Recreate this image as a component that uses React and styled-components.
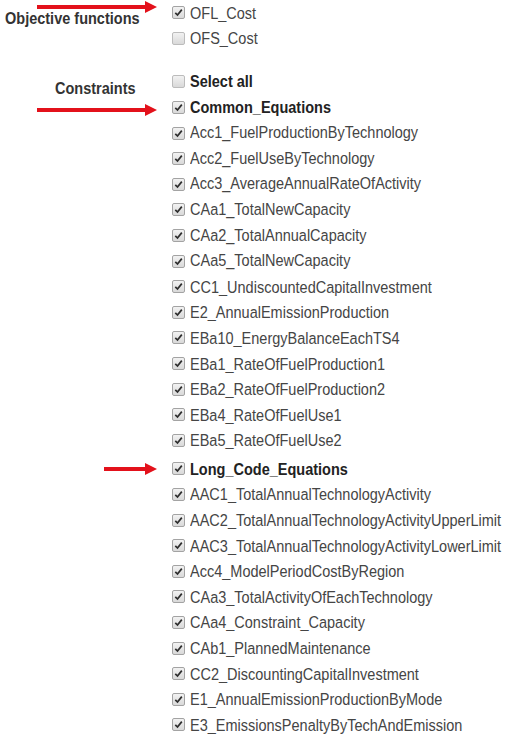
import React from 'react';
import styled, { createGlobalStyle } from 'styled-components';

const GlobalStyle = createGlobalStyle`
  body {
    margin: 0;
    background: #ffffff;
    font-family: "Liberation Sans", Arial, sans-serif;
  }
`;

const Page = styled.div`
  width: 507px;
  height: 736px;
  overflow: hidden;
  background: #ffffff;
`;

const Section = styled.div`
  display: grid;
  grid-template-columns: 172px 1fr;
  margin-top: ${(p) => p.$gap || 0}px;
`;

const SectionLabel = styled.div`
  font-size: 14.5px;
  font-weight: bold;
  color: #333;
  padding-top: ${(p) => p.$top}px;
  padding-left: ${(p) => p.$left}px;
  white-space: nowrap;
  transform: scaleY(1.1);
  transform-origin: left top;
`;

const List = styled.div`
  display: flex;
  flex-direction: column;
`;

const Row = styled.div`
  position: relative;
  display: flex;
  align-items: center;
  gap: 4px;
  height: 25.6px;
  margin-top: ${(p) => p.$gap || 0}px;
  font-size: 14.5px;
  color: ${(p) => (p.$bold ? '#222' : '#454545')};
  font-weight: ${(p) => (p.$bold ? 'bold' : 'normal')};
  white-space: nowrap;
`;

const Label = styled.span`
  display: inline-block;
  transform: scaleY(1.1);
`;

const Box = styled.span`
  flex: none;
  width: 11px;
  height: 11px;
  border: 1px solid ${(p) => (p.$checked ? '#a3a3a3' : '#bcbcbc')};
  border-radius: 2px;
  background: linear-gradient(#f2f2f2, #d9d9d9);
  display: flex;
  align-items: center;
  justify-content: center;
  margin-right: 1px;
`;

const ArrowWrap = styled.svg`
  position: absolute;
  right: calc(100% + 15px);
  top: calc(50% - 7px + ${(p) => p.$dy || 0}px);
`;

function Arrow({ length, dy }) {
  return (
    <ArrowWrap width={length} height="14" viewBox={`0 0 ${length} 14`} $dy={dy}>
      <rect x="0" y="5" width={length - 10} height="4" fill="#e3111b" />
      <polygon points={`${length - 12},1 ${length},7 ${length - 12},13`} fill="#e3111b" />
    </ArrowWrap>
  );
}

function Check({ label, checked = true, bold, arrow, gap }) {
  return (
    <Row $bold={bold} $gap={gap}>
      {arrow && <Arrow length={arrow.length} dy={arrow.dy} />}
      <Box $checked={checked}>
        {checked && (
          <svg width="9" height="9" viewBox="0 0 9 9">
            <path d="M1.3 4.8 L3.5 7 L7.8 1.6" stroke="#2e2e2e" strokeWidth="1.7" fill="none" />
          </svg>
        )}
      </Box>
      <Label>{label}</Label>
    </Row>
  );
}

const common = [
  'Acc1_FuelProductionByTechnology',
  'Acc2_FuelUseByTechnology',
  'Acc3_AverageAnnualRateOfActivity',
  'CAa1_TotalNewCapacity',
  'CAa2_TotalAnnualCapacity',
  'CAa5_TotalNewCapacity',
  'CC1_UndiscountedCapitalInvestment',
  'E2_AnnualEmissionProduction',
  'EBa10_EnergyBalanceEachTS4',
  'EBa1_RateOfFuelProduction1',
  'EBa2_RateOfFuelProduction2',
  'EBa4_RateOfFuelUse1',
  'EBa5_RateOfFuelUse2',
];

const longCode = [
  'AAC1_TotalAnnualTechnologyActivity',
  'AAC2_TotalAnnualTechnologyActivityUpperLimit',
  'AAC3_TotalAnnualTechnologyActivityLowerLimit',
  'Acc4_ModelPeriodCostByRegion',
  'CAa3_TotalActivityOfEachTechnology',
  'CAa4_Constraint_Capacity',
  'CAb1_PlannedMaintenance',
  'CC2_DiscountingCapitalInvestment',
  'E1_AnnualEmissionProductionByMode',
  'E3_EmissionsPenaltyByTechAndEmission',
];

export default function App() {
  return (
    <Page>
      <GlobalStyle />
      <Section>
        <SectionLabel $top={9} $left={5}>Objective functions</SectionLabel>
        <List>
          <Check label="OFL_Cost" arrow={{ length: 120, dy: -6 }} />
          <Check label="OFS_Cost" checked={false} />
        </List>
      </Section>

      <Section $gap={18}>
        <SectionLabel $top={10} $left={55}>Constraints</SectionLabel>
        <List>
          <Check label="Select all" checked={false} bold />
          <Check label="Common_Equations" bold arrow={{ length: 120, dy: 2 }} />
          {common.map((name) => (
            <Check key={name} label={name} />
          ))}
          <Check label="Long_Code_Equations" bold gap={3} arrow={{ length: 53, dy: 0 }} />
          {longCode.map((name) => (
            <Check key={name} label={name} />
          ))}
        </List>
      </Section>
    </Page>
  );
}
